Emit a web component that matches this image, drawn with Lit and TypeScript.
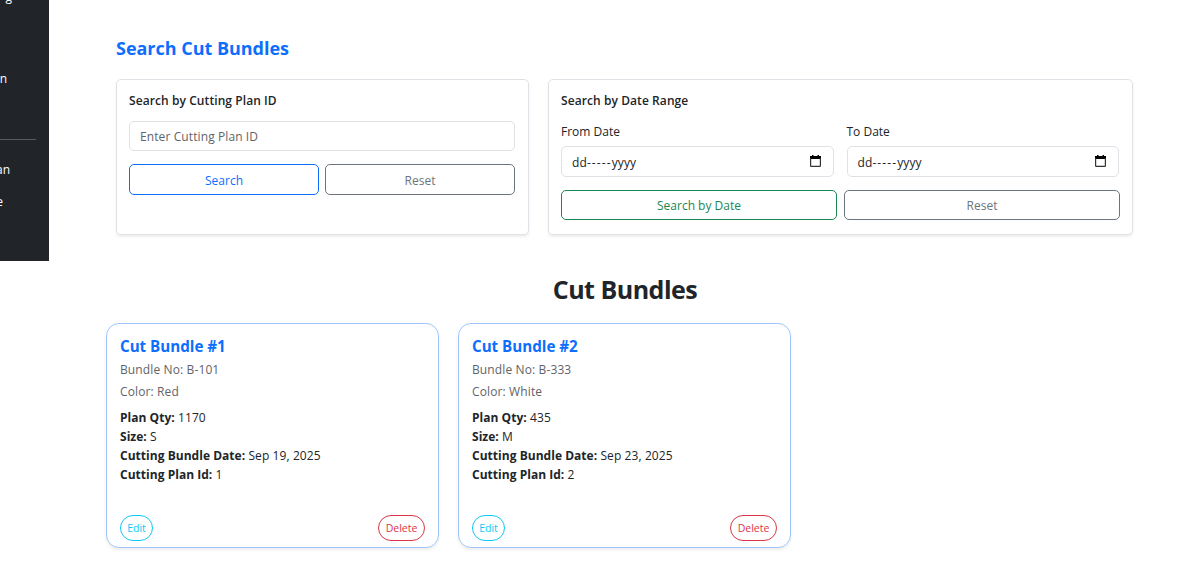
import { LitElement, html, css } from "lit";
import { customElement, property } from "lit/decorators.js";

interface Bundle {
  id: number;
  no: string;
  color: string;
  qty: number;
  size: string;
  date: string;
  plan: number;
}

const bundles: Bundle[] = [
  { id: 1, no: "B-101", color: "Red", qty: 1170, size: "S", date: "Sep 19, 2025", plan: 1 },
  { id: 2, no: "B-333", color: "White", qty: 435, size: "M", date: "Sep 23, 2025", plan: 2 },
];

@customElement("date-field")
class DateField extends LitElement {
  @property() label = "";

  static styles = css`
    :host { display: block; flex: 1; }
    .label { line-height: 19px; height: 19px; margin-bottom: 5px; }
    .control {
      box-sizing: border-box; height: 31px; border: 1px solid #dee2e6; border-radius: 5px;
      padding: 0 12px 0 10px; display: flex; align-items: center; justify-content: space-between;
    }
    .value { letter-spacing: 0.1px; padding-top: 1px; }
    .dash { letter-spacing: 1.1px; }
    svg { display: block; margin-top: -2px; }
  `;

  render() {
    return html`
      <div class="label">${this.label}</div>
      <div class="control">
        <span class="value">dd<span class="dash">-----</span>yyyy</span>
        <svg width="11" height="12" viewBox="0 0 11 12">
          <path d="M0 1h11v3H0zM2 0h1.5v2H2zM7.5 0H9v2H7.5z" fill="#000" />
          <path d="M.6 3v7.8q0 .6.6.6h8.6q.6 0 .6-.6V3" fill="none" stroke="#333" stroke-width="1.2" />
        </svg>
      </div>
    `;
  }
}

@customElement("bundle-card")
class BundleCard extends LitElement {
  @property({ attribute: false }) bundle!: Bundle;

  static styles = css`
    :host {
      box-sizing: border-box; display: flex; flex-direction: column;
      width: 333px; height: 225px; padding: 11px 13px 6px;
      border: 1px solid #9ec5fe; border-radius: 13px;
      box-shadow: 0 2px 3px rgba(0, 0, 0, 0.075);
    }
    .title { font-size: 15.2px; font-weight: 700; color: #0d6efd; line-height: 22px; height: 22px; margin-bottom: 2px; letter-spacing: -0.02px; }
    .sub { color: #5f6469; line-height: 22px; height: 22px; letter-spacing: 0.12px; }
    .facts { margin-top: 5px; line-height: 19px; letter-spacing: 0.1px; }
    b { font-weight: 700; letter-spacing: 0.03px; }
    .actions { margin-top: auto; display: flex; justify-content: space-between; }
    .pill {
      box-sizing: border-box; height: 26px; line-height: 24px; border: 1px solid; border-radius: 13px;
      font-size: 10.5px; text-align: center;
    }
    .edit { color: #0dcaf0; width: 33px; }
    .delete { color: #dc3545; width: 47px; }
  `;

  render() {
    const b = this.bundle;
    return html`
      <div class="title">Cut Bundle #${b.id}</div>
      <div class="sub">Bundle No: ${b.no}</div>
      <div class="sub">Color: ${b.color}</div>
      <div class="facts">
        <div><b>Plan Qty:</b> ${b.qty}</div>
        <div><b>Size:</b> ${b.size}</div>
        <div><b>Cutting Bundle Date:</b> ${b.date}</div>
        <div><b>Cutting Plan Id:</b> ${b.plan}</div>
      </div>
      <div class="actions">
        <div class="pill edit">Edit</div>
        <div class="pill delete">Delete</div>
      </div>
    `;
  }
}

@customElement("app-root")
class AppRoot extends LitElement {
  static styles = css`
    :host {
      display: flex; align-items: flex-start; width: 1178px; height: 582px; overflow: hidden;
      background: #fff; color: #212529;
      font: 12px "Segoe UI", "Open Sans", "Noto Sans", sans-serif;
    }
    .side {
      flex: none; box-sizing: border-box; width: 49px; height: 261px; background: #212529; color: #fff;
      overflow: hidden; display: flex; flex-direction: column; align-items: flex-start; line-height: 20px;
    }
    .nav { height: 20px; display: flex; justify-content: flex-end; white-space: nowrap; }
    .n1 { margin-top: -13px; width: 12px; }
    .n2 { margin-top: 62px; width: 7px; }
    .n3 { margin-top: 20px; width: 10px; }
    .n4 { margin-top: 12px; width: 3px; }
    .rule { width: 36px; height: 1px; background: #585b5e; margin-top: 50px; }
    .main { padding: 36px 45px 0 57px; width: 1027px; }
    .title {
      margin-left: 10px; font-size: 18px; font-weight: 700; color: #0d6efd; line-height: 24px;
      letter-spacing: -0.02px;
    }
    .panels { display: flex; gap: 19px; margin: 19px 0 0 10px; }
    .panel {
      box-sizing: border-box; height: 156px; border: 1px solid #dee2e6; border-radius: 5px;
      padding: 12px 13px 12px 12px; box-shadow: 0 2px 3px rgba(0, 0, 0, 0.075);
    }
    .by-id { width: 413px; }
    .by-date { width: 585px; }
    .heading { font-weight: 600; line-height: 18px; height: 18px; letter-spacing: 0.08px; }
    .input {
      box-sizing: border-box; height: 30px; border: 1px solid #dee2e6; border-radius: 5px;
      margin-top: 11px; padding-left: 10px; line-height: 29px; color: #5f6469; letter-spacing: 0.1px;
    }
    .buttons { display: flex; gap: 6px; margin-top: 13px; }
    .by-date .buttons { gap: 7px; margin-right: -1px; }
    .dates { display: flex; gap: 13px; margin-top: 12px; }
    .btn {
      box-sizing: border-box; flex: 1; height: 31px; line-height: 31px; border: 1px solid;
      border-radius: 5px; text-align: center;
    }
    .by-date .btn { height: 30px; line-height: 29px; }
    .primary { color: #0d6efd; }
    .secondary { color: #6c757d; }
    .success { color: #198754; }
    .section {
      text-align: center; font-size: 25px; font-weight: 700; line-height: 36px; margin-top: 36px;
      width: 1038px; letter-spacing: -0.5px;
    }
    .cards { display: flex; gap: 19px; margin-top: 16px; }
  `;

  render() {
    return html`
      <div class="side">
        <div class="nav n1">g</div>
        <div class="nav n2">n</div>
        <div class="rule"></div>
        <div class="nav n3">an</div>
        <div class="nav n4">e</div>
      </div>
      <div class="main">
        <div class="title">Search Cut Bundles</div>
        <div class="panels">
          <div class="panel by-id">
            <div class="heading">Search by Cutting Plan ID</div>
            <div class="input">Enter Cutting Plan ID</div>
            <div class="buttons">
              <div class="btn primary">Search</div>
              <div class="btn secondary">Reset</div>
            </div>
          </div>
          <div class="panel by-date">
            <div class="heading">Search by Date Range</div>
            <div class="dates">
              <date-field label="From Date"></date-field>
              <date-field label="To Date"></date-field>
            </div>
            <div class="buttons">
              <div class="btn success">Search by Date</div>
              <div class="btn secondary">Reset</div>
            </div>
          </div>
        </div>
        <div class="section">Cut Bundles</div>
        <div class="cards">
          ${bundles.map((b) => html`<bundle-card .bundle=${b}></bundle-card>`)}
        </div>
      </div>
    `;
  }
}
